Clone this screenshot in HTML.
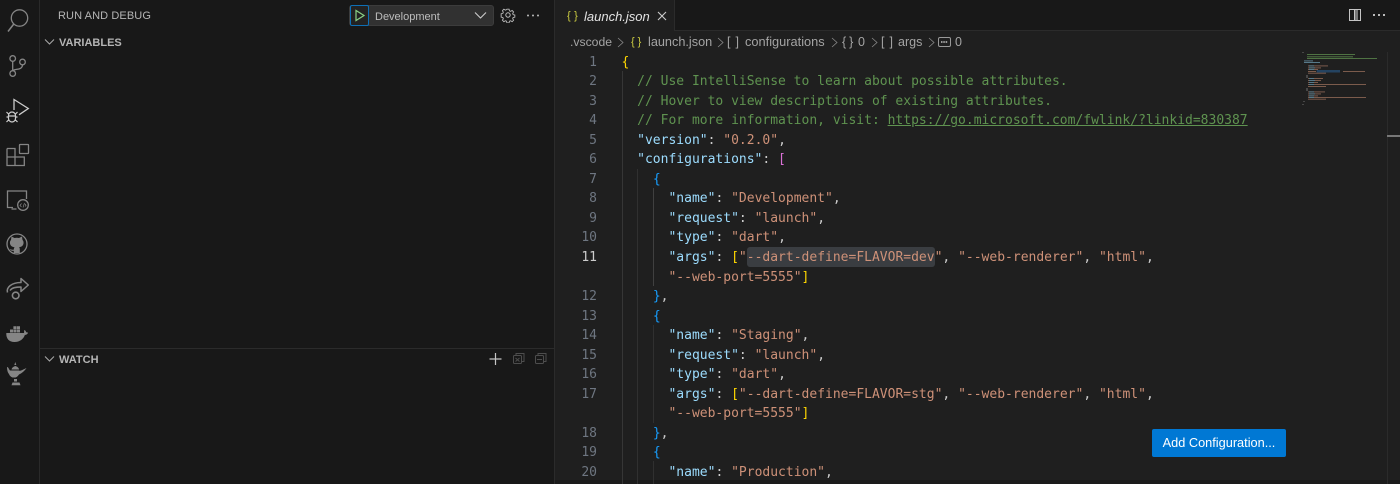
<!DOCTYPE html>
<html><head><meta charset="utf-8">
<style>
html,body{margin:0;padding:0;width:1400px;height:484px;overflow:hidden;background:#181818}
*{box-sizing:border-box}
.a{position:absolute}
#root{position:relative;width:1400px;height:484px;overflow:hidden;font-family:"Liberation Sans",sans-serif;color:#bbb}
.ui{position:absolute;white-space:nowrap;font-size:11px;line-height:14px}
.n{position:absolute;left:560px;width:37px;text-align:right;font:13px/19.5px "DejaVu Sans Mono",monospace;color:#6e7681;height:19.5px;margin-top:1.5px}
.l{position:absolute;left:621.5px;white-space:pre;font:13px/19.5px "DejaVu Sans Mono",monospace;color:#ccc;height:19.5px;margin-top:1.5px}
.c{color:#5f9350}.k{color:#9cdcfe}.s{color:#ce9178}.y{color:#ffd700}.p{color:#da70d6}.b{color:#179fff}
.g{position:absolute;width:1px;background:#333}
.bc{position:absolute;top:35px;font-size:12.5px;line-height:14px;color:#a4a4a4;white-space:nowrap}
</style></head><body>
<div id="root">
<!-- backgrounds -->
<div class="a" style="left:39px;top:0;width:1px;height:484px;background:#2a2a2a"></div>
<div class="a" style="left:554px;top:0;width:1px;height:484px;background:#2b2b2b"></div>
<div class="a" style="left:555px;top:0;width:845px;height:484px;background:#1f1f1f"></div>
<div class="a" style="left:675px;top:0;width:725px;height:31px;background:#181818;border-bottom:1px solid #2b2b2b"></div>
<div class="a" style="left:555px;top:0;width:120px;height:31px;background:#1f1f1f;border-right:1px solid #2b2b2b"></div>
<div class="a" style="left:40px;top:348px;width:514px;height:1px;background:#2b2b2b"></div>
<div class="a" style="left:555px;top:480px;width:845px;height:4px;background:#1b1b1b"></div>

<!-- activity bar -->
<svg class="a" style="left:0;top:0" width="39" height="484" fill="none" stroke="#858585" stroke-width="1.3">
<circle cx="19.5" cy="18" r="8.2"/><path d="M13.8 24 8 31.5" stroke-width="1.5"/>
<circle cx="12.7" cy="58.5" r="2.8"/><circle cx="12.7" cy="73.5" r="2.8"/><circle cx="22.5" cy="62" r="2.8"/><path d="M12.7 61.3v9.4M22.5 64.8c0 3.5-3 4.2-6 4.6-1.6.2-3 .6-3.8 1.3"/>
<path d="M14 110V99.500l14.300 9-9.300 6.300" stroke="#ccc" stroke-width="1.3"/>
<path d="M8.500 115.500a3.500 3.500 0 0 1 7 0v3a3.500 3.500 0 0 1-7 0zM8.500 116h7M6.500 112l2 2M17.500 112l-2 2M6.500 117h2M15.500 117h2M6.500 122l2-2M17.500 122l-2-2" stroke="#ccc" stroke-width="1.2"/>
<path d="M7 148.500h8v17M7 157h17.300v8.500H7zM7 148.500v17"/><rect x="19.500" y="144.500" width="9" height="9" rx=".5"/>
<path d="M13 207.500H7.500V191h19v8M11.500 209h5"/><circle cx="23" cy="205" r="5.300"/><path d="M21.500 203.500l-1.500 2 1.500 1.500M24.500 203l-1.500 4.500M25 204l1 1.500-1 1" stroke-width=".7"/>
<circle cx="17" cy="244" r="10"/>
<path fill="#858585" stroke="none" d="M11.500 236.500l3 1.500c1.500-.4 3-.4 4.500 0l3-1.500.5 3.500c1 1 1.200 2.200 1 3.500-.4 2.500-2.500 3.500-4.500 3.800.6.500.8 1.200.8 2v3.700h-6v-2.200c-2 .4-3.200-.2-4-2 .8.600 1.800 1.200 4 .8 0-.8.200-1.600.8-2.300-2.200-.3-4.200-1.300-4.600-3.800-.2-1.300 0-2.500 1-3.500z"/>
<circle cx="15.700" cy="295.500" r="3.300" stroke-width="1.600"/><path d="M7.500 292.500c-1.500-5 4-10 13.500-10v-4l7.300 6.500-7.300 6.500v-4.500c-5 0-9 .5-11 3.500" stroke-width="1.500" stroke-linejoin="round"/>
<path fill="#858585" stroke="none" d="M6.300 333H24c.3-1-.1-2.500.4-3 1.100.5 1.600 1.300 1.800 2.300.7 0 1.300.1 1.900.4-.7 1.500-1.900 2.200-3.200 2.200C23.500 339 20 342 14.500 342c-5.500 0-8.500-3.500-8.200-9z"/>
<path fill="#858585" stroke="none" d="M10 329.500h3v3h-3zM13.400 329.500h3v3h-3zM16.800 329.500h3.200v3h-3.200zM13.400 326.300h3v2.800h-3zM16.800 326.300h3.200v2.800h-3.200z"/>
<path fill="#858585" stroke="none" d="M7 367c1.500 0 2 2.500 3 3.500h9c1 1 4-1 7.500-2.500-2 3-5 5.500-7.500 6.500-1 1.500-2 2.500-3.500 3h-3c-2-.7-3-2-3.500-3.500C8 373 7 370.500 7 367zM11.500 369.500c.5-2 2-3 3.800-3.500 1.800.5 3.300 1.500 3.800 3.500zM15.300 362l1 3h-2zM14 379h3v2.500h-3zM12.500 382.500h7l1 2.800h-9z"/>
</svg>

<!-- sidebar -->
<div class="ui" style="left:58px;top:9px;color:#b5b5b5;letter-spacing:.1px">RUN AND DEBUG</div>
<svg class="a" style="left:44px;top:37px" width="12" height="10" fill="none" stroke="#aaa"><path d="M1 2.500 5.500 7 10 2.500"/></svg>
<div class="ui" style="left:59px;top:36px;font-weight:bold;color:#b5b5b5">VARIABLES</div>
<svg class="a" style="left:44px;top:354px" width="12" height="10" fill="none" stroke="#aaa"><path d="M1 2.500 5.500 7 10 2.500"/></svg>
<div class="ui" style="left:59px;top:353px;font-weight:bold;color:#b5b5b5">WATCH</div>

<!-- debug dropdown -->
<div class="a" style="left:349px;top:5px;width:145px;height:21px;background:#313131;border:1px solid #3c3c3c;border-radius:3px"></div>
<div class="a" style="left:350px;top:5px;width:19px;height:21px;border:1px solid #0e6fb5;border-radius:2px;background:#222"></div>
<svg class="a" style="left:350px;top:5px" width="19" height="21" fill="none" stroke="#89d185" stroke-width="1.2"><path d="M6 5.500v10l8-5z"/></svg>
<div class="ui" style="left:375px;top:10px;color:#bdbdbd">Development</div>
<svg class="a" style="left:474px;top:11px" width="14" height="10" fill="none" stroke="#ccc" stroke-width="1.1"><path d="M1 1.500 6.500 7 12 1.500"/></svg>
<svg class="a" style="left:500px;top:7px" width="16" height="16" fill="none" stroke="#bbb" stroke-width="1"><circle cx="8" cy="8" r="2.200"/><path d="M6.800 1.500h2.400l.4 1.900 1.300.6 1.700-1 1.600 1.600-1 1.700.5 1.300 1.900.4v2.400l-1.900.4-.5 1.300 1 1.700-1.600 1.600-1.700-1-1.300.5-.4 1.900H6.800l-.4-1.900-1.300-.5-1.700 1-1.600-1.600 1-1.700-.5-1.300-1.900-.4V6.600l1.900-.4.500-1.300-1-1.700 1.600-1.600 1.700 1 1.300-.6z" transform="translate(.8 .8) scale(.9)"/></svg>
<svg class="a" style="left:526px;top:14px" width="14" height="4" fill="#bbb"><circle cx="2" cy="1.500" r="1"/><circle cx="7" cy="1.500" r="1"/><circle cx="12" cy="1.500" r="1"/></svg>

<!-- watch actions -->
<svg class="a" style="left:488px;top:351px" width="60" height="16" fill="none" stroke="#c5c5c5">
<path d="M1.500 8h12M7.500 2v12" stroke-width="1.200"/>
<g stroke="#4d4d4d"><rect x="25.500" y="4.500" width="8" height="8" rx="1"/><path d="M28 4.500V2.500h8v8h-2.500M27.500 7l4 3.500M31.500 7l-4 3.500"/>
<rect x="47.500" y="4.500" width="8" height="8" rx="1"/><path d="M50 4.500V2.500h8v8h-2.500M49 8.500h5"/></g>
</svg>

<!-- tab -->
<div class="ui" style="left:567px;top:9px;font:11px/14px 'Liberation Sans',sans-serif;color:#cbcb41;letter-spacing:3.500px">{}</div>
<div class="ui" style="left:584px;top:9px;font-size:13px;line-height:15px;font-style:italic;color:#e2e2e2">launch.json</div>
<svg class="a" style="left:656px;top:10px" width="12" height="12" fill="none" stroke="#ccc" stroke-width="1.100"><path d="M2 2l8 8M10 2l-8 8"/></svg>
<svg class="a" style="left:1348px;top:8px" width="14" height="14" fill="none" stroke="#c5c5c5" stroke-width="1"><rect x="1.500" y="1.500" width="11" height="11"/><path d="M6.500 1.500v11"/><path fill="#777" stroke="none" d="M7 2h3v10H7z"/></svg>
<svg class="a" style="left:1372px;top:14px" width="14" height="4" fill="#bbb"><rect x="1" y="0" width="2" height="2"/><rect x="6" y="0" width="2" height="2"/><rect x="11" y="0" width="2" height="2"/></svg>

<!-- breadcrumbs -->
<div class="bc" style="left:570px;font-size:12.2px">.vscode</div>
<svg class="a" style="left:616px;top:37px" width="10" height="11" fill="none" stroke="#8a8a8a" stroke-width=".8"><path d="M2 1l5 4.500-5 4.500"/></svg>
<div class="bc" style="left:631px;font-size:11px;color:#cbcb41;letter-spacing:3px">{}</div>
<div class="bc" style="left:648px;font-size:12.700px">launch.json</div>
<svg class="a" style="left:716px;top:37px" width="10" height="11" fill="none" stroke="#8a8a8a" stroke-width=".8"><path d="M2 1l5 4.500-5 4.500"/></svg>
<div class="bc" style="left:727px;letter-spacing:5px">[]</div>
<div class="bc" style="left:745px;font-size:12.800px">configurations</div>
<svg class="a" style="left:830px;top:37px" width="10" height="11" fill="none" stroke="#8a8a8a" stroke-width=".8"><path d="M2 1l5 4.500-5 4.500"/></svg>
<div class="bc" style="left:842px;letter-spacing:3px">{}</div>
<div class="bc" style="left:858px">0</div>
<svg class="a" style="left:870px;top:37px" width="10" height="11" fill="none" stroke="#8a8a8a" stroke-width=".8"><path d="M2 1l5 4.500-5 4.500"/></svg>
<div class="bc" style="left:881px;letter-spacing:5px">[]</div>
<div class="bc" style="left:898px">args</div>
<svg class="a" style="left:927px;top:37px" width="10" height="11" fill="none" stroke="#8a8a8a" stroke-width=".8"><path d="M2 1l5 4.500-5 4.500"/></svg>
<svg class="a" style="left:938px;top:36px" width="14" height="12" fill="none" stroke="#999"><rect x=".5" y="1.500" width="12" height="9" rx="1.500"/><path d="M3 6h7" stroke-width="2" stroke-dasharray="1.500 .8"/></svg>
<div class="bc" style="left:955px">0</div>

<!-- guides -->
<div class="g" style="left:622px;top:71px;height:413px;background:#363636"></div>
<div class="g" style="left:637px;top:169px;height:315px;background:#303030"></div>
<div class="g" style="left:653px;top:188px;height:98px;background:#404040"></div>
<div class="g" style="left:653px;top:325px;height:98px;background:#303030"></div>
<div class="g" style="left:653px;top:461px;height:23px;background:#303030"></div>

<!-- highlight -->
<div class="a" style="left:747px;top:247px;width:188px;height:19.500px;background:#3a3d41;border-radius:3px"></div>

<!-- line numbers -->
<div class="n" style="top:51.200px">1</div>
<div class="n" style="top:70.700px">2</div>
<div class="n" style="top:90.200px">3</div>
<div class="n" style="top:109.800px">4</div>
<div class="n" style="top:129.300px">5</div>
<div class="n" style="top:148.800px">6</div>
<div class="n" style="top:168.300px">7</div>
<div class="n" style="top:187.900px">8</div>
<div class="n" style="top:207.400px">9</div>
<div class="n" style="top:226.900px">10</div>
<div class="n" style="top:246.400px;color:#ccc">11</div>
<div class="n" style="top:285.500px">12</div>
<div class="n" style="top:305px">13</div>
<div class="n" style="top:324.500px">14</div>
<div class="n" style="top:344.100px">15</div>
<div class="n" style="top:363.600px">16</div>
<div class="n" style="top:383.100px">17</div>
<div class="n" style="top:422.200px">18</div>
<div class="n" style="top:441.700px">19</div>
<div class="n" style="top:461.200px">20</div>

<!-- code -->
<div class="l" style="top:51.200px"><span class="y">{</span></div>
<div class="l c" style="top:70.700px">  // Use IntelliSense to learn about possible attributes.</div>
<div class="l c" style="top:90.200px">  // Hover to view descriptions of existing attributes.</div>
<div class="l c" style="top:109.800px">  // For more information, visit: <span style="text-decoration:underline">https://go.microsoft.com/fwlink/?linkid=830387</span></div>
<div class="l" style="top:129.300px">  <span class="k">"version"</span>: <span class="s">"0.2.0"</span>,</div>
<div class="l" style="top:148.800px">  <span class="k">"configurations"</span>: <span class="p">[</span></div>
<div class="l" style="top:168.300px">    <span class="b">{</span></div>
<div class="l" style="top:187.900px">      <span class="k">"name"</span>: <span class="s">"Development"</span>,</div>
<div class="l" style="top:207.400px">      <span class="k">"request"</span>: <span class="s">"launch"</span>,</div>
<div class="l" style="top:226.900px">      <span class="k">"type"</span>: <span class="s">"dart"</span>,</div>
<div class="l" style="top:246.400px">      <span class="k">"args"</span>: <span class="y">[</span><span class="s">"--dart-define=FLAVOR=dev"</span>, <span class="s">"--web-renderer"</span>, <span class="s">"html"</span>,</div>
<div class="l" style="top:266px">      <span class="s">"--web-port=5555"</span><span class="y">]</span></div>
<div class="l" style="top:285.500px">    <span class="b">}</span>,</div>
<div class="l" style="top:305px">    <span class="b">{</span></div>
<div class="l" style="top:324.500px">      <span class="k">"name"</span>: <span class="s">"Staging"</span>,</div>
<div class="l" style="top:344.100px">      <span class="k">"request"</span>: <span class="s">"launch"</span>,</div>
<div class="l" style="top:363.600px">      <span class="k">"type"</span>: <span class="s">"dart"</span>,</div>
<div class="l" style="top:383.100px">      <span class="k">"args"</span>: <span class="y">[</span><span class="s">"--dart-define=FLAVOR=stg"</span>, <span class="s">"--web-renderer"</span>, <span class="s">"html"</span>,</div>
<div class="l" style="top:402.600px">      <span class="s">"--web-port=5555"</span><span class="y">]</span></div>
<div class="l" style="top:422.200px">    <span class="b">}</span>,</div>
<div class="l" style="top:441.700px">    <span class="b">{</span></div>
<div class="l" style="top:461.200px">      <span class="k">"name"</span>: <span class="s">"Production"</span>,</div>

<!-- minimap -->
<svg class="a" style="left:1300px;top:50px;opacity:.75" width="100" height="60">
<g fill="#5f8f4f"><rect x="7" y="4" width="48" height="1"/><rect x="7" y="6.300" width="46" height="1"/><rect x="7" y="8" width="70" height="1"/></g>
<g fill="#6a97ad"><rect x="4" y="10.400" width="9" height="1"/><rect x="4" y="12" width="16" height="1"/></g>
<rect x="16.700" y="20" width="23.300" height="2.500" fill="#264f78"/>
<g fill="#9a6f5c">
<rect x="8" y="15.400" width="20" height="1"/><rect x="8" y="17.400" width="13" height="1"/><rect x="8" y="19" width="10" height="1"/><rect x="8" y="21" width="8" height="1"/><rect x="43" y="21" width="22" height="1"/><rect x="8" y="22.700" width="18" height="1"/>
<rect x="8" y="28" width="15" height="1"/><rect x="8" y="30" width="13" height="1"/><rect x="8" y="32" width="10" height="1"/><rect x="8" y="34" width="58" height="1"/><rect x="8" y="36" width="18" height="1"/>
<rect x="8" y="41.400" width="17" height="1"/><rect x="8" y="43.400" width="13" height="1"/><rect x="8" y="45.400" width="10" height="1"/><rect x="8" y="47" width="58" height="1"/><rect x="8" y="48.700" width="18" height="1"/></g>
<g fill="#6a97ad"><rect x="9" y="15.400" width="5" height="1"/><rect x="9" y="17.400" width="6" height="1"/><rect x="9" y="19" width="5" height="1"/><rect x="9" y="28" width="5" height="1"/><rect x="9" y="30" width="6" height="1"/><rect x="9" y="32" width="5" height="1"/><rect x="9" y="34" width="5" height="1"/><rect x="9" y="41.400" width="5" height="1"/><rect x="9" y="43.400" width="6" height="1"/><rect x="9" y="45.400" width="5" height="1"/><rect x="9" y="47" width="5" height="1"/></g>
<g fill="#555"><rect x="2" y="2" width="2" height="1"/><rect x="6" y="25" width="2" height="3"/><rect x="6" y="38" width="2" height="3"/><rect x="3" y="51" width="2" height="1"/><rect x="2" y="54" width="2" height="1"/></g>
</svg>
<div class="a" style="left:1387px;top:52px;width:1px;height:432px;background:#2b2b2b"></div>
<div class="a" style="left:1387px;top:135px;width:13px;height:1.500px;background:#777"></div>

<!-- button -->
<div class="a" style="left:1152px;top:429px;width:134px;height:28px;background:#0078d4;border-radius:2px;color:#fff;font-size:12.750px;line-height:28px;text-align:center">Add Configuration...</div>
</div>
</body></html>
